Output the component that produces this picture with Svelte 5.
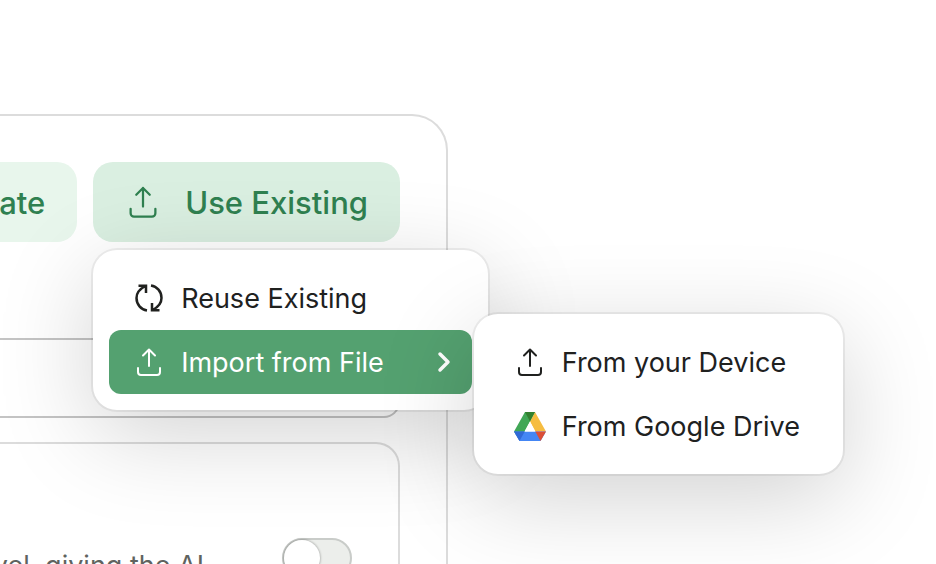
<script lang="ts">
  let openMenu = $state(true);
  let openFiles = $state(true);
  let prompt = $state("");
  let guided = $state(false);

  const toggleMenu = () => {
    openMenu = !openMenu;
  };
  const toggleFiles = () => {
    openFiles = !openFiles;
  };
</script>

{#snippet upload()}
  <svg class="icon" viewBox="0 0 32 32" aria-hidden="true">
    <path d="M16 20V3.500M10 9.500l6-6 6 6M5 22v4a3 3 0 0 0 3 3h16a3 3 0 0 0 3-3v-4" />
  </svg>
{/snippet}

<main class="page">
  <section class="card">
    <div class="actions">
      <button class="action">Generate</button>
      <div class="dropdown">
        <button
          class="action active"
          aria-haspopup="menu"
          aria-expanded={openMenu}
          onclick={toggleMenu}
        >
          {@render upload()}
          Use Existing
        </button>
        {#if openMenu}
          <ul class="menu" role="menu">
            <li role="none">
              <button class="item" role="menuitem">
                <svg class="icon cycle" viewBox="0 0 32 32" aria-hidden="true">
                  <path d="M14 28.500C8 27.500 3.500 22.500 3.500 16c0-5 3-9 9-12M5.500 3.800H13V11" />
                  <path d="M18 3.500c6 1 10.500 6 10.500 12.500 0 5-3 9-9 12M26.500 28.200H19V21" />
                </svg>
                Reuse Existing
              </button>
            </li>
            <li class="parent" role="none">
              <button
                class="item selected"
                role="menuitem"
                aria-haspopup="menu"
                aria-expanded={openFiles}
                onclick={toggleFiles}
              >
                {@render upload()}
                Import from File
                <svg class="chevron" viewBox="0 0 16 24" aria-hidden="true">
                  <path d="M4 4l8 8-8 8" />
                </svg>
              </button>
              {#if openFiles}
                <ul class="menu submenu" role="menu">
                  <li role="none">
                    <button class="item" role="menuitem">
                      {@render upload()}
                      From your Device
                    </button>
                  </li>
                  <li role="none">
                    <button class="item" role="menuitem">
                      <svg class="drive" viewBox="0 0 32 29" aria-hidden="true">
                        <path fill="#41a756" d="M11 0h10l-5 9.500L5.500 28.500 0 19.500z" />
                        <path fill="#f6bd41" d="M21 0l11 19.500H21.300L16 9.500z" />
                        <path fill="#4486f4" d="M0 19.500h32L26.500 29h-21z" />
                        <path fill="#32802f" d="M11 0h10l-5 9.500z" />
                        <path fill="#3069d6" d="M0 19.500h10.700L5.500 29z" />
                        <path fill="#dc4e36" d="M21.300 19.500H32L26.500 29z" />
                        <path fill="#fff" d="M16 9.500l5.300 10H10.700z" />
                      </svg>
                      From Google Drive
                    </button>
                  </li>
                </ul>
              {/if}
            </li>
          </ul>
        {/if}
      </div>
    </div>

    <input class="field" type="text" aria-label="Prompt" bind:value={prompt} />

    <div class="panel">
      <label class="hint" for="guided">level, giving the AI</label>
      <input id="guided" class="switch" type="checkbox" role="switch" bind:checked={guided} />
    </div>
  </section>
</main>

<style>
  :global(body) {
    margin: 0;
    background: #fff;
  }
  .page {
    box-sizing: border-box;
    height: 100vh;
    padding: 114px 488px 0 0;
    overflow: hidden;
    font-family: Inter, "Liberation Sans", sans-serif;
    color: #20211f;
  }
  .card {
    box-sizing: border-box;
    min-height: 100%;
    padding: 46px 46px 46px 0;
    border: 2px solid #dcdcdc;
    border-left: 0;
    border-radius: 0 36px 0 0;
  }
  button {
    border: 0;
    font: inherit;
    color: inherit;
    white-space: nowrap;
    cursor: pointer;
  }
  .actions {
    display: flex;
    justify-content: flex-end;
    gap: 16px;
  }
  .action {
    display: flex;
    align-items: center;
    gap: 24px;
    height: 80px;
    padding: 0 32px;
    border-radius: 20px;
    background: #e8f6ec;
    color: #2f8050;
    font-size: 31px;
    font-weight: 500;
  }
  .action.active {
    background: #daefe1;
  }
  .icon {
    flex: none;
    width: 32px;
    height: 32px;
    fill: none;
    stroke: currentColor;
    stroke-width: 2;
    stroke-linecap: round;
    stroke-linejoin: round;
  }
  .icon.cycle {
    stroke-width: 2.5;
    stroke-linecap: butt;
    stroke-linejoin: miter;
  }
  .action .icon {
    width: 36px;
    height: 36px;
  }
  .dropdown {
    position: relative;
  }
  .menu {
    position: absolute;
    z-index: 1;
    top: calc(100% + 8px);
    left: 0;
    width: max-content;
    margin: 0;
    padding: 16px;
    border-radius: 24px;
    background: #fff;
    list-style: none;
    box-shadow:
      0 0 0 2px rgba(0, 0, 0, 0.06),
      0 24px 96px rgba(0, 0, 0, 0.18);
  }
  .parent {
    position: relative;
  }
  .submenu {
    top: -16px;
    left: calc(100% + 2px);
  }
  .item {
    display: flex;
    align-items: center;
    gap: 16px;
    width: 100%;
    height: 64px;
    padding: 0 27px 0 24px;
    border-radius: 12px;
    background: none;
    font-size: 27px;
  }
  .item.selected {
    padding-right: 20px;
    background: #54a170;
    color: #fff;
  }
  .chevron {
    width: 16px;
    height: 24px;
    margin-left: 36px;
    fill: none;
    stroke: currentColor;
    stroke-width: 3.5;
    stroke-linecap: round;
    stroke-linejoin: round;
  }
  .drive {
    flex: none;
    width: 32px;
    height: 29px;
  }
  .field {
    box-sizing: border-box;
    display: block;
    width: 100%;
    height: 80px;
    margin-top: 96px;
    padding: 0 24px;
    border: 2px solid #c4c4c4;
    border-left: 0;
    border-radius: 0 16px 16px 0;
    background: #fff;
    font: inherit;
    font-size: 27px;
  }
  .panel {
    display: flex;
    justify-content: flex-end;
    align-items: flex-start;
    gap: 78px;
    margin-top: 24px;
    padding: 94px 46px 46px 0;
    border: 2px solid #dcdcdc;
    border-left: 0;
    border-radius: 0 24px 24px 0;
  }
  .hint {
    flex: none;
    padding-top: 8px;
    color: #5f635f;
    font-size: 27px;
    line-height: 40px;
  }
  .switch {
    appearance: none;
    box-sizing: border-box;
    flex: none;
    width: 70px;
    height: 40px;
    margin: 0;
    border: 2px solid #c9ccc9;
    border-radius: 20px;
    background: #eceeeb;
    cursor: pointer;
  }
  .switch::before {
    content: "";
    display: block;
    width: 36px;
    height: 36px;
    border-radius: 50%;
    background: #fff;
    box-shadow: 0 0 2px 1px rgba(0, 0, 0, 0.2);
  }
  .switch:checked {
    background: #54a170;
  }
  .switch:checked::before {
    margin-left: 30px;
  }
</style>
